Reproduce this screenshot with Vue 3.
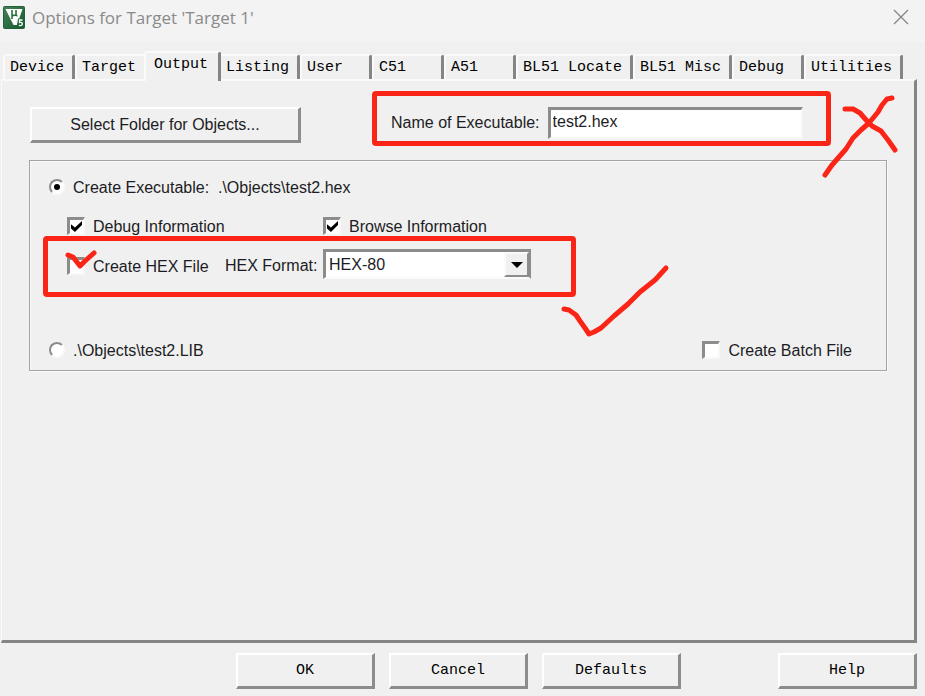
<script setup>
import { ref } from 'vue'

const tabs = ['Device', 'Target', 'Output', 'Listing', 'User', 'C51', 'A51', 'BL51 Locate', 'BL51 Misc', 'Debug', 'Utilities']
const active = ref('Output')
const executable = ref('test2.hex')
const kind = ref('exe')
const debugInfo = ref(true)
const browseInfo = ref(true)
const createHex = ref(false)
const batchFile = ref(false)
const hexFormat = ref('HEX-80')
</script>

<template>
  <div class="dialog">
    <header class="titlebar">
      <svg class="logo" width="22" height="23" viewBox="0 0 22 23" aria-hidden="true">
        <defs>
          <linearGradient id="logo-fill" x1="0" y1="0" x2="1" y2="1">
            <stop offset="0" stop-color="#47835a" />
            <stop offset="1" stop-color="#125a2b" />
          </linearGradient>
        </defs>
        <rect x="0.5" y="0.5" width="21" height="22" rx="1" fill="url(#logo-fill)" stroke="#20613a" />
        <path d="M2.500 3H19.500L14 19H10.500Z" fill="#fff" />
        <path d="M9 4V13M9 8.500Q11 10.500 13 8.500V4M13 8Q13.200 10 14.500 9.500" fill="none" stroke="#28703f" stroke-width="1.600" />
        <path d="M15 12.500H21V21H14Z" fill="#1d6536" />
        <path d="M19.500 14H16.500V16.500Q19.500 16 19.300 18Q19 20 15.800 19.400" fill="none" stroke="#fff" stroke-width="1.300" />
      </svg>
      <h1 class="title">Options for Target 'Target 1'</h1>
      <button class="close" type="button" aria-label="Close">
        <svg width="16" height="16" viewBox="0 0 16 16"><path d="M1 1L15 15M15 1L1 15" stroke="#858585" stroke-width="1.300" /></svg>
      </button>
    </header>

    <nav class="tabs" role="tablist">
      <button
        v-for="tab in tabs"
        :key="tab"
        type="button"
        role="tab"
        class="tab"
        :class="{ active: tab === active }"
        :aria-selected="tab === active"
        @click="active = tab"
      >{{ tab }}</button>
    </nav>

    <main class="page">
      <div class="top-row">
        <button class="push folder" type="button">Select Folder for Objects...</button>
        <div class="name-field">
          <label for="executable">Name of Executable:</label>
          <input id="executable" v-model="executable" class="text-box" type="text" />
          <span class="mark-box name-mark"></span>
        </div>
        <svg class="cross" width="80" height="88" viewBox="0 0 80 88" aria-hidden="true">
          <path d="M26 16L34 16L41 20L48 28L53 33L62 38L69 47L76 57M73 5L68 6L63 12L59 19L50 30L42 37L34 45L27 56L20 64L13 72L6 82" />
        </svg>
      </div>

      <section class="group">
        <div class="row">
          <input id="kind-exe" v-model="kind" class="radio" type="radio" value="exe" name="kind" />
          <label for="kind-exe">Create Executable:&nbsp; .\Objects\test2.hex</label>
        </div>
        <div class="row options info-row">
          <div class="choice">
            <input id="debug-info" v-model="debugInfo" class="check" type="checkbox" />
            <label for="debug-info">Debug Information</label>
          </div>
          <div class="choice">
            <input id="browse-info" v-model="browseInfo" class="check" type="checkbox" />
            <label for="browse-info">Browse Information</label>
          </div>
        </div>
        <div class="row options hex-row">
          <div class="choice hex-choice">
            <input id="create-hex" v-model="createHex" class="check" type="checkbox" />
            <label for="create-hex">Create HEX File</label>
            <svg class="small-tick" width="32" height="24" viewBox="0 0 32 24" aria-hidden="true">
              <path d="M3 6L8 8L15 17L20 12L29 4" />
            </svg>
          </div>
          <label class="format-label" for="hex-format">HEX Format:</label>
          <div class="combo">
            <select id="hex-format" v-model="hexFormat">
              <option>HEX-80</option>
              <option>HEX-386</option>
            </select>
            <span class="arrow"><svg width="12" height="6" viewBox="0 0 12 6"><path d="M0 0H12L6 6Z" /></svg></span>
          </div>
          <span class="mark-box hex-mark"></span>
          <svg class="big-tick" width="112" height="80" viewBox="0 0 112 80" aria-hidden="true">
            <path d="M4 48L9 49L16 54L20 60L25 67L29 73L34 71L41 67L54 55L68 43L80 31L95 19L106 7" />
          </svg>
        </div>
        <div class="row last-row">
          <input id="kind-lib" v-model="kind" class="radio" type="radio" value="lib" name="kind" />
          <label for="kind-lib">.\Objects\test2.LIB</label>
          <div class="choice batch">
            <input id="batch" v-model="batchFile" class="check" type="checkbox" />
            <label for="batch">Create Batch File</label>
          </div>
        </div>
      </section>
    </main>

    <footer class="footer">
      <button class="push" type="button">OK</button>
      <button class="push" type="button">Cancel</button>
      <button class="push" type="button">Defaults</button>
      <button class="push help" type="button">Help</button>
    </footer>
  </div>
</template>

<style>
body {
  background: #f0f0f0;
}
</style>

<style scoped>
.dialog {
  display: flex;
  flex-direction: column;
  box-sizing: border-box;
  min-height: 100vh;
  background: #f0f0f0;
  color: #1c1c24;
  font: 16px/20px "Liberation Sans", Arial, sans-serif;
}
.dialog * {
  box-sizing: border-box;
}
button,
input,
select {
  margin: 0;
  color: inherit;
  font: inherit;
}
label {
  white-space: nowrap;
}
.titlebar {
  display: flex;
  align-items: center;
  height: 42px;
  padding: 0 16px 8px 3px;
  background: #f3f3f3;
}
.title {
  flex: 1;
  margin: 0 0 0 7px;
  padding-top: 2px;
  color: #8a8a8a;
  font: 400 17px/24px "Open Sans", "Noto Sans", sans-serif;
}
.close {
  display: flex;
  padding: 0;
  border: 0;
  background: none;
}
.tabs {
  display: flex;
  align-items: flex-end;
  height: 37px;
  padding-left: 3px;
}
.tab {
  flex: none;
  min-width: 72px;
  height: 25px;
  padding: 0 8px 0 5px;
  border: solid;
  border-width: 2px 3px 0 2px;
  border-color: #fafafa #858585 #fafafa #fafafa;
  border-radius: 3px 3px 0 0;
  background: #f0f0f0;
  color: #000;
  font: 15px/20px "Liberation Mono", monospace;
  text-align: left;
  white-space: nowrap;
}
.tab.active {
  position: relative;
  z-index: 1;
  min-width: 77px;
  height: 30px;
  margin: 0 -2px -2px -3px;
  padding: 0 8px 4px;
}
.page {
  flex: 1;
  margin-right: 8px;
  margin-left: 1px;
  padding: 26px 27px 26px;
  border: solid;
  border-width: 2px 3px 3px 1px;
  border-color: #fafafa #858585 #858585 #fafafa;
}
.top-row {
  position: relative;
  display: flex;
  align-items: flex-start;
}
.push {
  width: 139px;
  height: 36px;
  padding: 0;
  border: solid;
  border-width: 2px 3px 3px 2px;
  border-color: #fff #8c8c8c #8c8c8c #fff;
  background: #f0f0f0;
}
.push.folder {
  width: 271px;
  margin-left: 1px;
}
.name-field {
  position: relative;
  display: flex;
  flex: 1;
  align-items: center;
  gap: 8px;
  margin: 0 84px 0 90px;
}
.text-box {
  flex: 1;
  min-width: 0;
  height: 32px;
  padding: 0 2px 3px;
  border: solid;
  border-width: 3px 2px 2px 3px;
  border-color: #8c8c8c #f6f6f6 #f6f6f6 #8c8c8c;
  background: #fff;
  outline: 0;
}
.mark-box {
  position: absolute;
  border: 5px solid #fb2517;
  border-radius: 4px;
  pointer-events: none;
}
.name-mark {
  top: -16px;
  right: -28px;
  bottom: -7px;
  left: -19px;
}
.cross,
.small-tick,
.big-tick {
  position: absolute;
  fill: none;
  stroke: #fb2517;
  stroke-width: 5;
  stroke-linecap: round;
  stroke-linejoin: round;
  pointer-events: none;
}
.cross {
  top: -14px;
  right: -12px;
}
.group {
  margin-top: 17px;
  padding: 15px 34px 9px 19px;
  border: 1px solid #a3a3a3;
  box-shadow: inset 1px 1px #fafafa, 1px 1px #fafafa;
}
.row {
  display: flex;
  align-items: center;
}
.row label {
  padding-top: 2px;
}
.radio,
.check {
  flex: none;
  appearance: none;
  position: relative;
  background: #fff;
}
.radio {
  width: 16px;
  height: 16px;
  margin-right: 8px;
  border: 2px solid;
  border-color: #8c8c8c #fafafa #fafafa #8c8c8c;
  border-radius: 50%;
}
.radio:checked::before {
  content: "";
  position: absolute;
  inset: 3px;
  border-radius: 50%;
  background: #000;
}
.check {
  width: 18px;
  height: 18px;
  margin-right: 8px;
  border: solid;
  border-width: 3px 2px 2px 3px;
  border-color: #8c8c8c #f8f8f8 #f8f8f8 #8c8c8c;
}
.check:checked::before {
  content: "";
  position: absolute;
  inset: 1px;
  background: #000;
  clip-path: polygon(0 30%, 36% 60%, 100% 0, 100% 36%, 36% 100%, 0 68%);
}
.options {
  padding-left: 18px;
}
.choice {
  display: flex;
  align-items: center;
}
.info-row {
  display: grid;
  grid-template-columns: 256px 1fr;
  margin-top: 17px;
}
.hex-row {
  position: relative;
  height: 30px;
  margin-top: 12px;
}
.hex-choice {
  position: relative;
  width: 158px;
  padding-top: 4px;
}
.row .format-label {
  width: 98px;
  padding-top: 4px;
}
.small-tick {
  top: -2px;
  left: -2px;
}
.combo {
  position: relative;
  display: flex;
  width: 208px;
  height: 30px;
  border: solid;
  border-width: 3px 2px 2px 3px;
  border-color: #8c8c8c #8c8c8c #fafafa #8c8c8c;
}
.combo select {
  width: 100%;
  padding: 0 28px 0 3px;
  border: 0;
  border-radius: 0;
  outline: 0;
  appearance: none;
  background: #fff;
}
.arrow {
  position: absolute;
  inset: 0 0 0 auto;
  display: flex;
  align-items: center;
  justify-content: center;
  width: 25px;
  border: 2px solid;
  border-color: #fafafa #8c8c8c #8c8c8c #fafafa;
  background: #f0f0f0;
  pointer-events: none;
}
.hex-mark {
  top: -13px;
  left: -6px;
  width: 533px;
  height: 61px;
}
.big-tick {
  top: 12px;
  left: 511px;
}
.last-row {
  margin-top: 60px;
}
.batch {
  margin-left: auto;
}
.footer {
  display: flex;
  justify-content: flex-end;
  gap: 14px;
  padding: 10px 8px 7px;
}
.footer .push {
  color: #000;
  font: 15px/20px "Liberation Mono", monospace;
}
.footer .help {
  margin-left: 83px;
}
</style>
